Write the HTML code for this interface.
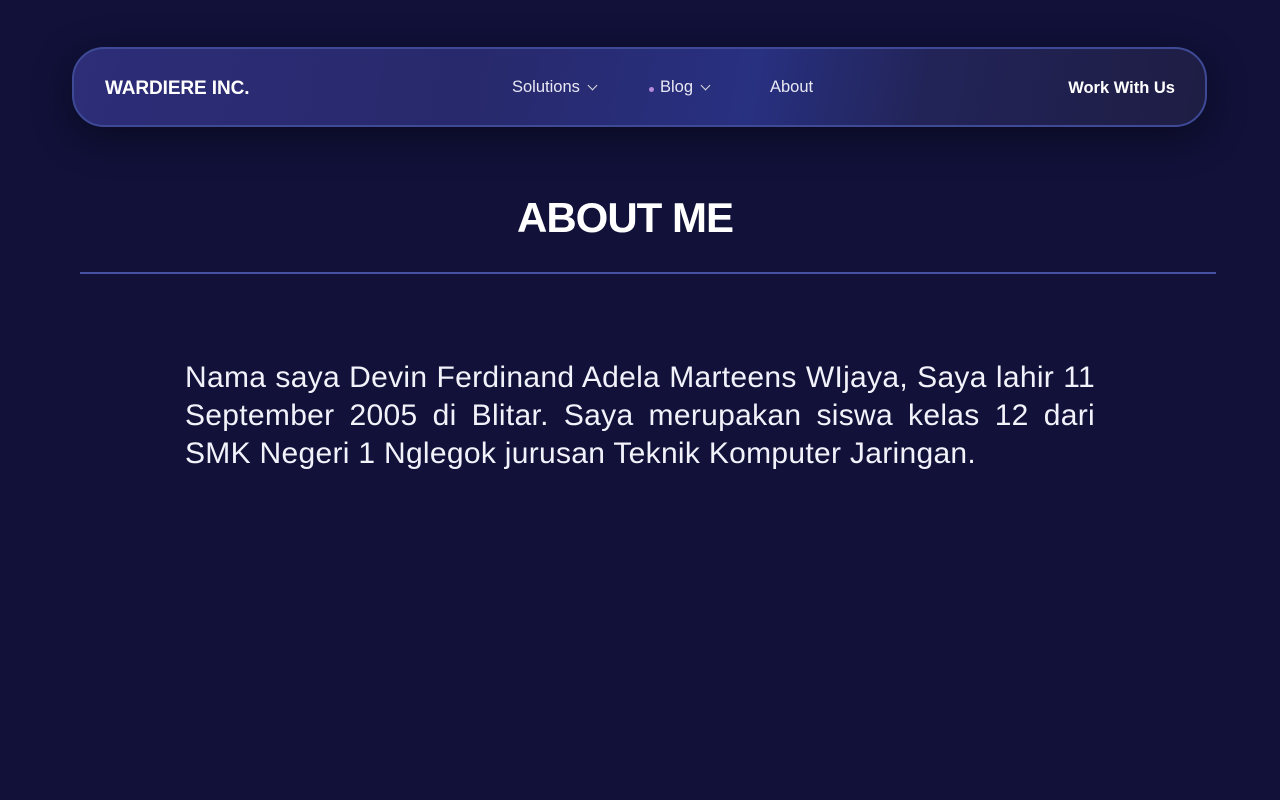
<!DOCTYPE html>
<html><head><meta charset="utf-8"><style>
*{margin:0;padding:0;box-sizing:border-box}
body{width:1280px;height:800px;background:#11113a;font-family:"Liberation Sans",sans-serif;color:#fff;overflow:hidden;position:relative}
.nav{position:absolute;left:72px;top:47px;width:1135px;height:80px;border-radius:32px;border:2px solid #3e4a96;
background:linear-gradient(100deg,#2d2d78 0%,#28296c 35%,#283080 60%,#222458 75%,#1e1d44 100%);
box-shadow:0 10px 40px rgba(0,0,0,.45)}
.logo{position:absolute;left:31px;top:29px;font-weight:bold;font-size:19px;letter-spacing:-.1px}
.links{position:absolute;top:29px;font-size:16.5px;color:#e8e8f4}
.chev{display:inline-block;width:7px;height:7px;border-right:1.5px solid #ddd;border-bottom:1.5px solid #ddd;transform:rotate(45deg);margin-left:9px;position:relative;top:-3px}
.dot{position:absolute;left:575px;top:38px;width:5px;height:5px;border-radius:50%;background:#b58ad8}
.work{position:absolute;right:30px;top:30px;font-weight:bold;font-size:16.5px}
h1{position:absolute;left:517px;top:194px;font-size:42px;font-weight:bold;letter-spacing:-1px}
.line{position:absolute;left:80px;top:272px;width:1136px;height:2px;background:#4651a3}
p{position:absolute;left:185px;top:359px;width:910px;font-size:30px;line-height:38px;color:#f2f2fa;letter-spacing:.3px}
p span{display:block;text-align:justify;text-align-last:justify;white-space:nowrap}
p span.l{text-align-last:left}
</style></head><body>
<div class="nav">
<div class="logo">WARDIERE INC.</div>
<div class="links" style="left:438px">Solutions<span class="chev"></span></div>
<div class="dot"></div>
<div class="links" style="left:586px">Blog<span class="chev"></span></div>
<div class="links" style="left:696px">About</div>
<div class="work">Work With Us</div>
</div>
<h1>ABOUT ME</h1>
<div class="line"></div>
<p><span style="white-space:normal">Nama saya Devin Ferdinand Adela Marteens WIjaya, Saya lahir 11</span><span style="white-space:normal">September 2005 di Blitar. Saya merupakan siswa kelas 12 dari</span><span class="l">SMK Negeri 1 Nglegok jurusan Teknik Komputer Jaringan.</span></p>
</body></html>
